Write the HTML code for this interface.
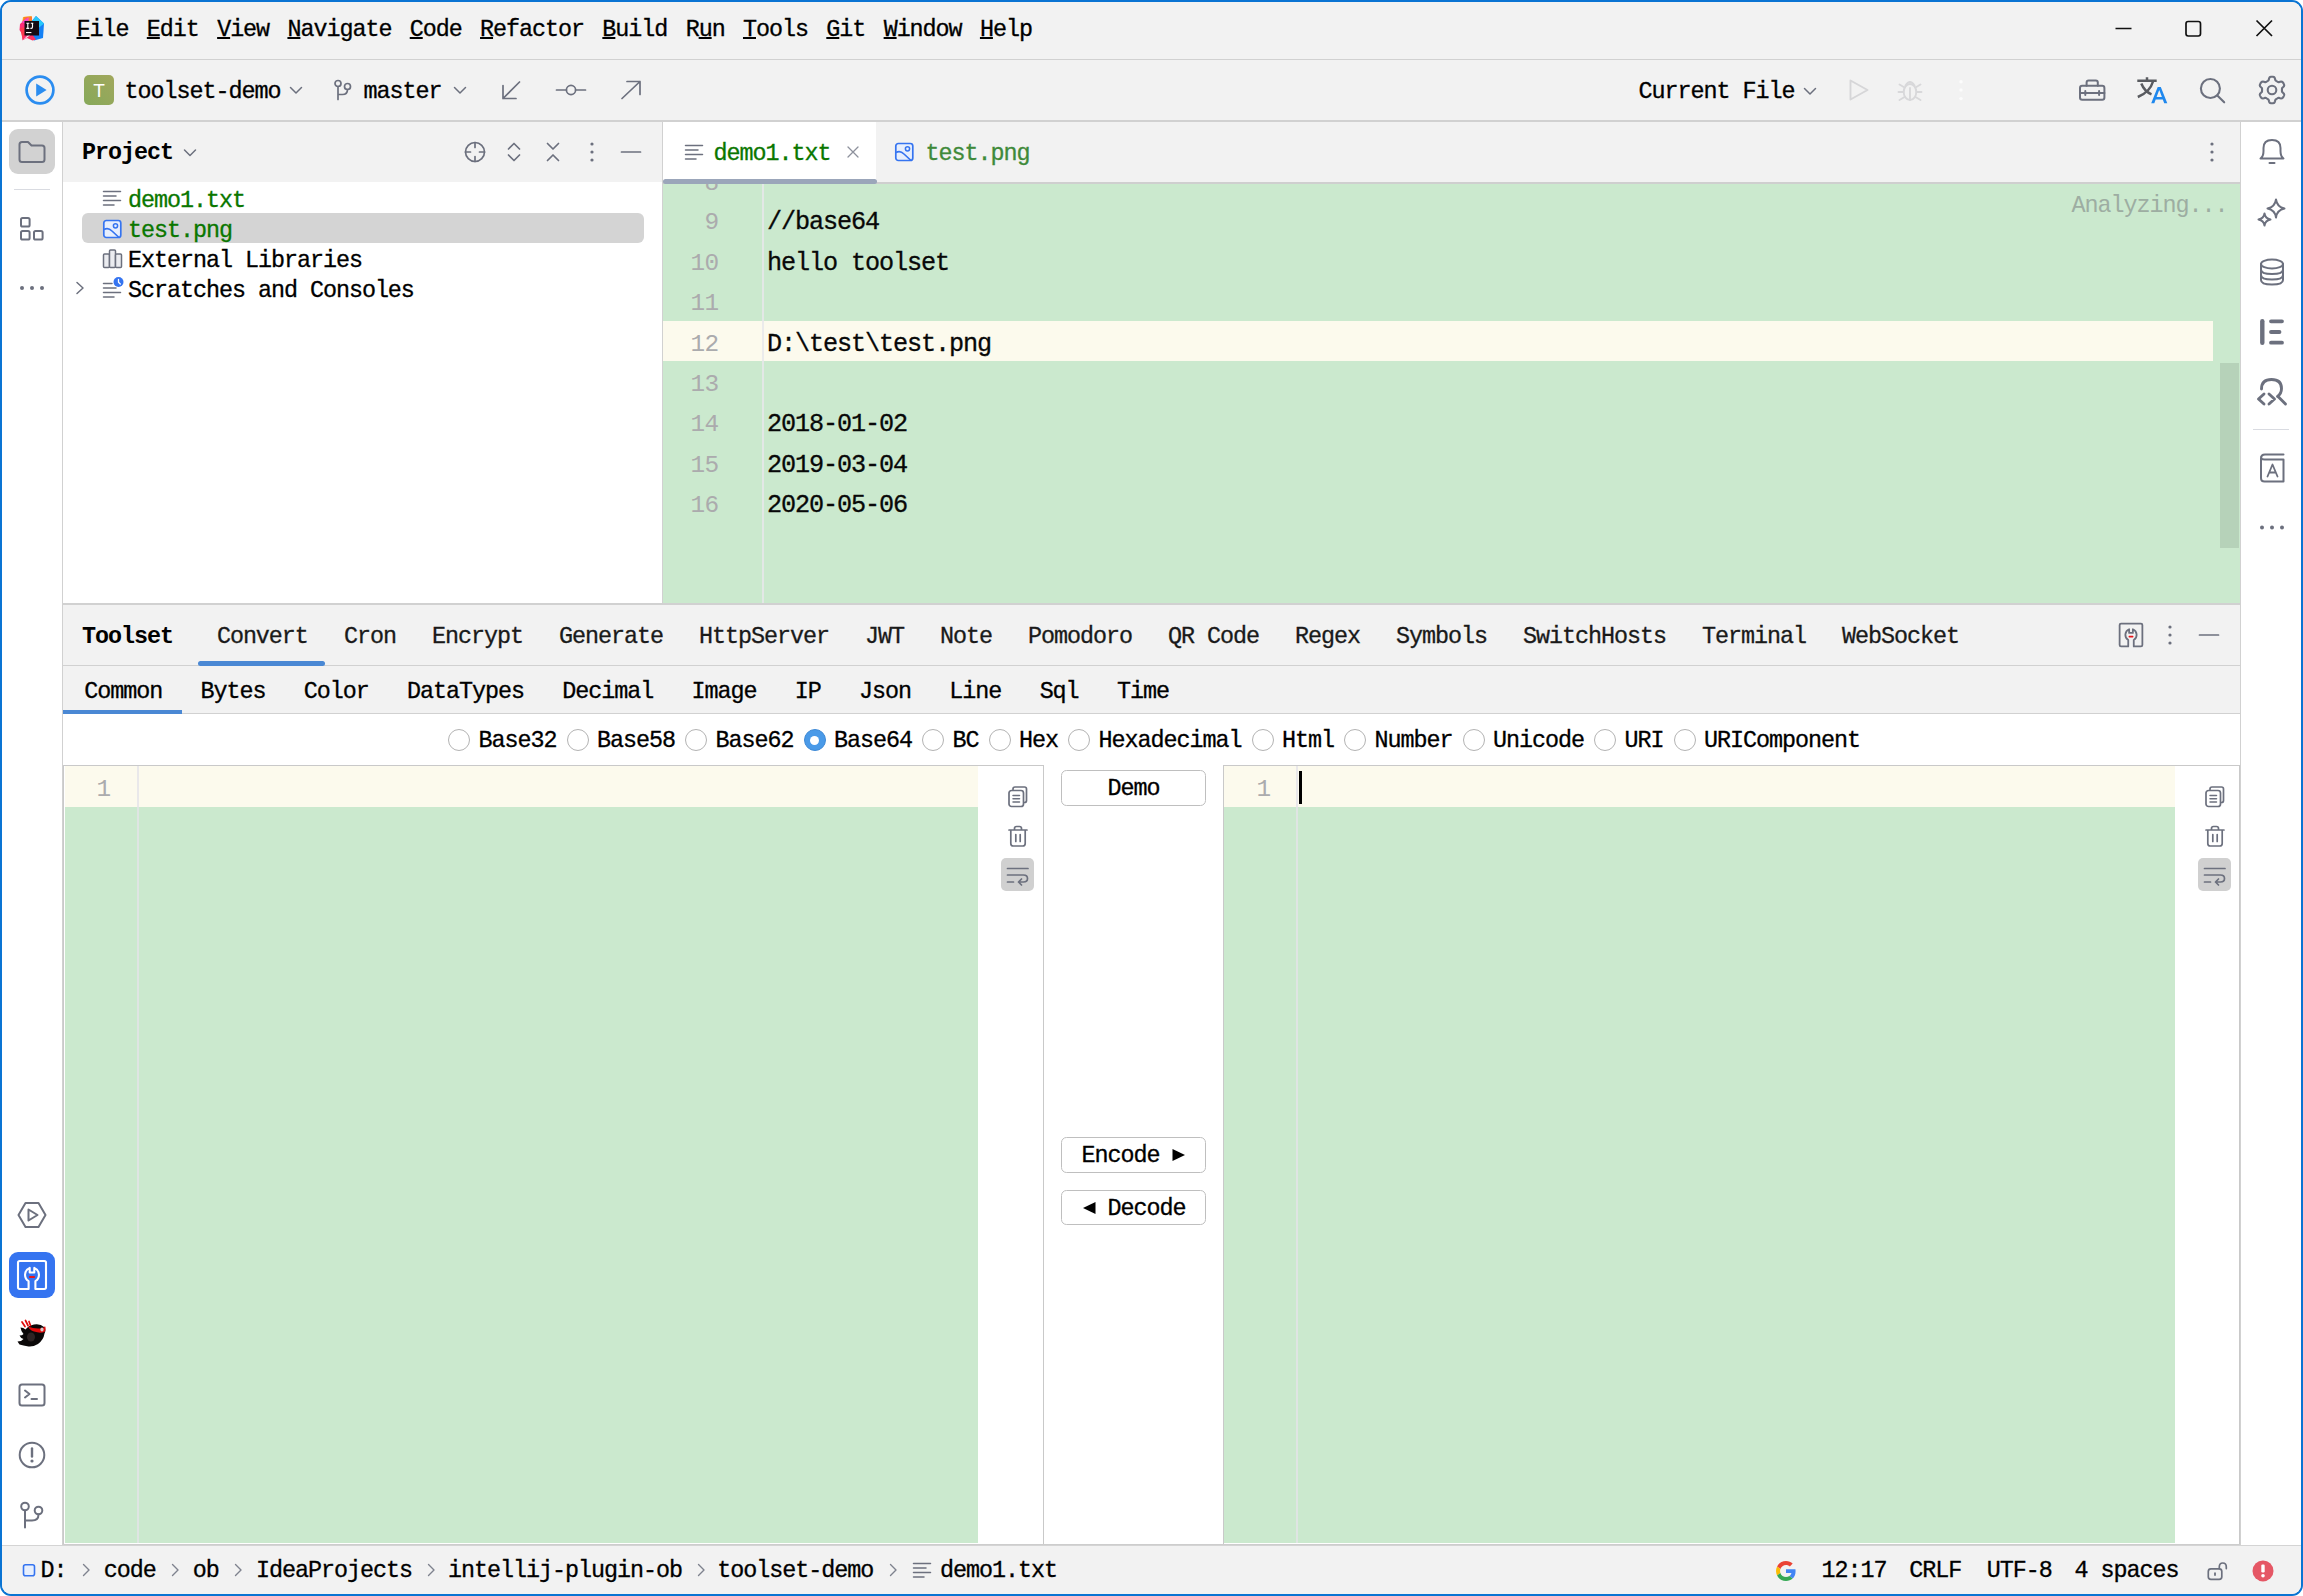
<!DOCTYPE html>
<html>
<head>
<meta charset="utf-8">
<title>toolset-demo</title>
<style>
html,body{margin:0;padding:0;background:#fff;}
body{width:2303px;height:1596px;overflow:hidden;position:relative;font-family:"Liberation Mono",monospace;color:#000;}
#win{position:absolute;left:0;top:0;width:2303px;height:1596px;box-sizing:border-box;border:2px solid #0a74d3;border-radius:11px;background:#f2f2f2;overflow:hidden;}
#root{position:absolute;left:-2px;top:-2px;width:2303px;height:1596px;}
.a{position:absolute;}
.bx{position:absolute;box-sizing:border-box;}
.t{position:absolute;white-space:pre;font-size:23.4px;letter-spacing:-1.043px;line-height:30px;height:30px;color:#000;-webkit-text-stroke:0.3px currentColor;}
.e{position:absolute;white-space:pre;font-size:25.2px;letter-spacing:-1.123px;line-height:40px;height:40px;color:#080808;-webkit-text-stroke:0.3px currentColor;}
.ln{position:absolute;white-space:pre;font-size:24.4px;letter-spacing:-0.643px;line-height:40px;height:40px;color:#ababad;text-align:right;}
.b{font-weight:bold;-webkit-text-stroke:0;}
.g{color:#0a7700;}
.hl{position:absolute;height:1px;background:#d1d1d1;}
.vl{position:absolute;width:1px;background:#d1d1d1;}
svg{position:absolute;overflow:visible;}
.s{fill:none;stroke:#6c707e;stroke-width:1.7;stroke-linecap:round;stroke-linejoin:round;}
.mi{display:inline-block;margin-right:18.33px;}
.mu{text-decoration:underline;text-decoration-thickness:2px;text-underline-offset:0.6px;}
</style>
</head>
<body>
<div id="win"><div id="root">

<!-- ===== base panels ===== -->
<div class="a" style="left:2px;top:2px;width:2299px;height:57px;background:#f2f2f2;"></div>
<div class="hl" style="left:2px;top:59px;width:2299px;"></div>
<div class="a" style="left:2px;top:60px;width:2299px;height:60px;background:#f2f2f2;"></div>
<div class="hl" style="left:2px;top:120px;width:2299px;height:2px;background:#d1d1d1;"></div>

<!-- left stripe -->
<div class="a" style="left:2px;top:122px;width:60px;height:1423px;background:#fff;"></div>
<div class="vl" style="left:62px;top:122px;height:1423px;"></div>
<!-- right stripe -->
<div class="a" style="left:2241px;top:122px;width:60px;height:1423px;background:#fff;"></div>
<div class="vl" style="left:2240px;top:122px;height:1423px;"></div>

<!-- project panel -->
<div class="a" style="left:63px;top:122px;width:599px;height:60px;background:#f2f2f2;"></div>
<div class="a" style="left:63px;top:182px;width:599px;height:421px;background:#fff;"></div>
<div class="vl" style="left:662px;top:122px;height:481px;"></div>

<!-- editor -->
<div class="a" style="left:663px;top:122px;width:1577px;height:61px;background:#f2f2f2;"></div>
<div class="hl" style="left:663px;top:182px;width:1577px;height:2px;background:#cfcfcf;"></div>
<div class="a" style="left:663px;top:184px;width:1577px;height:419px;background:#cbe9ce;"></div>

<!-- bottom tool window -->
<div class="hl" style="left:63px;top:603px;width:2177px;height:2px;"></div>
<div class="a" style="left:63px;top:605px;width:2177px;height:60px;background:#f2f2f2;"></div>
<div class="hl" style="left:63px;top:665px;width:2177px;"></div>
<div class="a" style="left:63px;top:666px;width:2177px;height:47px;background:#f2f2f2;"></div>
<div class="hl" style="left:63px;top:713px;width:2177px;"></div>
<div class="a" style="left:63px;top:714px;width:2177px;height:830px;background:#fff;"></div>

<!-- status bar -->
<div class="hl" style="left:63px;top:1544px;width:2177px;height:2px;background:#cdcdcd;"></div><div class="hl" style="left:2px;top:1545px;width:2299px;height:1px;background:#d4d4d4;"></div>
<div class="a" style="left:2px;top:1546px;width:2299px;height:48px;background:#f2f2f2;"></div>

<!-- ===== MENU ===== -->
<div class="t" style="left:76.5px;top:15px;"><span class="mi"><span class="mu">F</span>ile</span><span class="mi"><span class="mu">E</span>dit</span><span class="mi"><span class="mu">V</span>iew</span><span class="mi"><span class="mu">N</span>avigate</span><span class="mi"><span class="mu">C</span>ode</span><span class="mi"><span class="mu">R</span>efactor</span><span class="mi"><span class="mu">B</span>uild</span><span class="mi">R<span class="mu">u</span>n</span><span class="mi"><span class="mu">T</span>ools</span><span class="mi"><span class="mu">G</span>it</span><span class="mi"><span class="mu">W</span>indow</span><span class="mi"><span class="mu">H</span>elp</span></div>
<svg style="left:19px;top:15px;" width="26" height="26" viewBox="0 0 26 26">
<polygon points="4,2 12.500,1 14,13 2,15" fill="#fcb91c"/>
<polygon points="5,2 13,1.500 13,12 3,9" fill="#fd7a2c"/>
<polygon points="1,9 8,3 14,15 3.500,25.500 2.500,18 0.500,15" fill="#fe2d78"/>
<polygon points="2.500,7 9.500,2 10,11" fill="#f84ad4" opacity=".85"/>
<polygon points="1,13 8,12 4,25" fill="#fd3a4f"/>
<polygon points="17,1 25,8.500 24,23 15,25.500 11,21 12,7" fill="#1481f5"/>
<polygon points="17,1 25,8.500 19.500,13 13,6" fill="#27c8fb"/>
<polygon points="3.500,25.500 13,19 17,24.500 13.500,25.500 8,23" fill="#fd2f62"/>
<rect x="5.500" y="6" width="14.500" height="14.500" fill="#150b12"/>
<rect x="7" y="17" width="5.400" height="1.100" fill="#fff"/>
<path d="M7.300 8.200H10.300M8.800 8.200V13.300M7.300 13.300H10.300M11.800 8.200H14.300M13.500 8.200V12Q13.500 13.400 12.200 13.400H11.400" stroke="#fff" stroke-width="1.150" fill="none"/>
</svg>
<svg style="left:2112px;top:14px;" width="24" height="28" viewBox="0 0 24 28"><path d="M3.5 14.5H19.5" stroke="#111" stroke-width="1.7" fill="none"/></svg>
<svg style="left:2182px;top:14px;" width="24" height="28" viewBox="0 0 24 28"><rect x="4" y="7.5" width="14.5" height="14.5" rx="2.2" stroke="#111" stroke-width="1.7" fill="none"/></svg>
<svg style="left:2252px;top:14px;" width="24" height="28" viewBox="0 0 24 28"><path d="M4.5 6.5L20 22M20 6.5L4.5 22" stroke="#111" stroke-width="1.7" fill="none"/></svg>
<!--MENU-->

<!-- ===== TOOLBAR ===== -->
<svg style="left:24px;top:74px;" width="32" height="32" viewBox="0 0 32 32"><circle cx="16" cy="16" r="13.4" fill="none" stroke="#2b8df0" stroke-width="2.7"/><path d="M12.2 9.6L22.6 16L12.2 22.4Z" fill="#2b8df0"/></svg>
<div class="bx" style="left:84px;top:75px;width:30px;height:30px;border-radius:5px;background:linear-gradient(45deg,#86a95a,#a1a75c);"></div>
<div class="a" style="left:84px;top:75px;width:30px;height:30px;line-height:32px;text-align:center;font-family:'Liberation Sans',sans-serif;font-size:19px;color:#fff;">T</div>
<div class="t" style="left:124.5px;top:77px;">toolset-demo</div>
<svg style="left:288px;top:84px;" width="16" height="12" viewBox="0 0 16 12"><path class="s" d="M2.5 3.5L8 9L13.5 3.5" style="stroke-width:1.5"/></svg>
<svg style="left:332px;top:78px;" width="22" height="24" viewBox="0 0 22 24"><circle class="s" cx="6" cy="5.5" r="3"/><circle class="s" cx="15.5" cy="8.5" r="3"/><path class="s" d="M6 8.5V21.5M6 16.5H10.5Q15.5 16.5 15.5 11.5"/></svg>
<div class="t" style="left:363.5px;top:77px;">master</div>
<svg style="left:452px;top:84px;" width="16" height="12" viewBox="0 0 16 12"><path class="s" d="M2.5 3.5L8 9L13.5 3.5" style="stroke-width:1.5"/></svg>
<svg style="left:499px;top:78px;" width="24" height="24" viewBox="0 0 24 24"><path class="s" d="M20.5 4L4 20.5M4 7.5V20.5H17"/></svg>
<svg style="left:554px;top:78px;" width="34" height="24" viewBox="0 0 34 24"><circle class="s" cx="17" cy="12" r="4.6"/><path class="s" d="M2.5 12H12.4M21.6 12H31.5"/></svg>
<svg style="left:619px;top:78px;" width="24" height="24" viewBox="0 0 24 24"><path class="s" d="M3 20.5L21 3.5M8 3.5H21V16.5"/></svg>
<div class="t" style="left:1638.5px;top:77px;">Current File</div>
<svg style="left:1802px;top:85px;" width="16" height="12" viewBox="0 0 16 12"><path class="s" d="M2.5 3.5L8 9L13.5 3.5" style="stroke-width:1.5"/></svg>
<svg style="left:1846px;top:77px;" width="26" height="26" viewBox="0 0 26 26"><path d="M4.5 3.5L21.5 13L4.5 22.5Z" fill="none" stroke="#d6d6d8" stroke-width="1.9" stroke-linejoin="round"/></svg>
<svg style="left:1896px;top:76px;" width="28" height="28" viewBox="0 0 28 28" fill="none" stroke="#d8d8da" stroke-width="1.9" stroke-linecap="round"><ellipse cx="14" cy="16" rx="6.3" ry="8"/><path d="M9.5 9.5Q14 2.5 18.5 9.5M14 12V24M2.5 16H7.5M20.5 16H25.5M3.5 8.5L8.5 11.5M24.5 8.5L19.5 11.5M3.5 24L8.5 21M24.5 24L19.5 21"/></svg>
<svg style="left:1957px;top:78px;" width="6" height="24" viewBox="0 0 6 24" fill="#fcfcfc"><circle cx="4" cy="3.800" r="1.700"/><circle cx="4" cy="12" r="1.700"/><circle cx="4" cy="20.600" r="1.700"/></svg>
<svg style="left:2076px;top:76px;" width="32" height="28" viewBox="0 0 32 28"><rect class="s" style="stroke-width:2" x="4" y="9.700" width="24.400" height="14" rx="2.200"/><path class="s" style="stroke-width:2" d="M10.600 9.700V6.500Q10.600 4.500 12.600 4.500H19.800Q21.800 4.500 21.800 6.500V9.700M4 17H28.400M9.300 15V19M23.100 15V19"/></svg>
<svg style="left:2134px;top:74px;" width="36" height="32" viewBox="0 0 36 32"><path d="M3.300 6.800H22.700M13 3.300V6.800M19 7.500Q16 18 3.800 23M7.300 9.500Q10.500 17.500 17.500 20.300" fill="none" stroke="#595b60" stroke-width="2.500" stroke-linecap="butt"/><path d="M17.200 29.300L23.700 13H26.800L33.300 29.300H30.200L28.800 25.500H21.700L20.300 29.300ZM22.600 23.100H27.900L25.250 16Z" fill="#1f88ee"/></svg>
<svg style="left:2196px;top:74px;" width="32" height="32" viewBox="0 0 32 32"><circle class="s" cx="14.400" cy="14.500" r="9.500" style="stroke-width:2.100"/><path class="s" d="M21.300 21.400L28.200 28.300" style="stroke-width:2.100"/></svg>
<svg style="left:2256px;top:74px;" width="32" height="32" viewBox="0 0 32 32"><path class="s" style="stroke-width:2.100" d="M25.94 16.00L25.94 16.43L25.94 16.87L25.96 17.31L26.08 17.78L26.47 18.32L27.20 19.00L27.90 19.75L28.18 20.43L28.15 21.03L27.99 21.59L27.75 22.12L27.48 22.63L27.18 23.12L26.83 23.59L26.44 24.01L25.93 24.33L25.20 24.43L24.20 24.20L23.25 23.91L22.58 23.84L22.12 23.97L21.72 24.17L21.34 24.39L20.97 24.61L20.59 24.82L20.22 25.04L19.84 25.28L19.50 25.62L19.22 26.23L19.00 27.20L18.70 28.18L18.25 28.76L17.72 29.04L17.15 29.18L16.58 29.24L16.00 29.26L15.42 29.24L14.85 29.18L14.28 29.04L13.75 28.76L13.30 28.18L13.00 27.20L12.78 26.23L12.50 25.62L12.16 25.28L11.78 25.04L11.41 24.82L11.03 24.61L10.66 24.39L10.28 24.17L9.88 23.97L9.42 23.84L8.75 23.91L7.80 24.20L6.80 24.43L6.07 24.33L5.56 24.01L5.17 23.59L4.82 23.12L4.52 22.63L4.25 22.12L4.01 21.59L3.85 21.03L3.82 20.43L4.10 19.75L4.80 19.00L5.53 18.32L5.92 17.78L6.04 17.31L6.06 16.87L6.06 16.43L6.06 16.00L6.06 15.57L6.06 15.13L6.04 14.69L5.92 14.22L5.53 13.68L4.80 13.00L4.10 12.25L3.82 11.57L3.85 10.97L4.01 10.41L4.25 9.88L4.52 9.37L4.82 8.88L5.17 8.41L5.56 7.99L6.07 7.67L6.80 7.57L7.80 7.80L8.75 8.09L9.42 8.16L9.88 8.03L10.28 7.83L10.66 7.61L11.03 7.39L11.41 7.18L11.78 6.96L12.16 6.72L12.50 6.38L12.78 5.77L13.00 4.80L13.30 3.82L13.75 3.24L14.28 2.96L14.85 2.82L15.42 2.76L16.00 2.74L16.58 2.76L17.15 2.82L17.72 2.96L18.25 3.24L18.70 3.82L19.00 4.80L19.22 5.77L19.50 6.38L19.84 6.72L20.22 6.96L20.59 7.18L20.97 7.39L21.34 7.61L21.72 7.83L22.12 8.03L22.58 8.16L23.25 8.09L24.20 7.80L25.20 7.57L25.93 7.67L26.44 7.99L26.83 8.41L27.18 8.88L27.48 9.37L27.75 9.88L27.99 10.41L28.15 10.97L28.18 11.57L27.90 12.25L27.20 13.00L26.47 13.68L26.08 14.22L25.96 14.69L25.94 15.13L25.94 15.57Z"/><circle class="s" style="stroke-width:2.100" cx="16" cy="16" r="4.300"/></svg>
<!--TOOLBAR-->

<!-- ===== LEFT STRIPE ===== -->
<div class="bx" style="left:9px;top:129px;width:46px;height:45px;border-radius:9px;background:#d2d2d2;"></div>
<svg style="left:17px;top:139px;" width="30" height="26" viewBox="0 0 30 26"><path class="s" style="stroke-width:2" d="M2.5 5.5Q2.5 3 5 3H11L14.5 6.5H25Q27.5 6.5 27.5 9V20.5Q27.5 23 25 23H5Q2.5 23 2.5 20.5Z"/></svg>
<div class="hl" style="left:14px;top:189px;width:36px;background:#d9dbe1;"></div>
<svg style="left:18px;top:215px;" width="28" height="28" viewBox="0 0 28 28"><rect class="s" style="stroke-width:2" x="3" y="3" width="8.6" height="8.6" rx="1.6"/><rect class="s" style="stroke-width:2" x="3" y="16" width="8.6" height="8.6" rx="1.6"/><rect class="s" style="stroke-width:2" x="16" y="16" width="8.6" height="8.6" rx="1.6"/></svg>
<svg style="left:18px;top:284px;" width="28" height="8" viewBox="0 0 28 8" fill="#6c707e"><circle cx="4" cy="4" r="2"/><circle cx="14" cy="4" r="2"/><circle cx="24" cy="4" r="2"/></svg>
<svg style="left:16px;top:1200px;" width="32" height="30" viewBox="0 0 32 30"><path class="s" style="stroke-width:2" d="M9.5 3H22.5L29.5 15L22.5 27H9.5L2.5 15Z"/><path class="s" style="stroke-width:2" d="M12.5 9.5L21.5 15L12.5 20.5Z"/></svg>
<div class="bx" style="left:9px;top:1252px;width:46px;height:46px;border-radius:9px;background:#3574f0;"></div>
<svg style="left:16px;top:1259px;" width="32" height="32" viewBox="0 0 32 32"><path d="M12.600 30H3.700Q2 30 2 28.300V3.700Q2 2 3.700 2H28.300Q30 2 30 3.700V28.300Q30 30 28.300 30H19.400V22.200A7.500 7.500 0 0 0 18.300 8.900V13.500H13.700V8.900A7.500 7.500 0 0 0 12.600 22.200Z" fill="none" stroke="#fff" stroke-width="2.100" stroke-linejoin="round"/><rect x="13" y="17" width="6" height="2" rx=".8" fill="#e8151c"/></svg>
<svg style="left:16px;top:1318px;" width="32" height="32" viewBox="0 0 32 32"><path d="M4.500 9.500Q7.500 9.500 9.500 11.500Q12.500 7.500 18 6.500Q24.500 5.500 28 9Q30.500 12 28.500 15.500Q27.500 22 22 26Q17 29 12.500 28.500Q7 27.500 3.500 26.500L1.500 23.500Q5.500 23.500 7.500 21Q4.500 20 3.500 17.500Q6.500 17.500 7.500 16Q5 13.500 4.500 9.500Z" fill="#0b0808"/><ellipse cx="15" cy="19" rx="4" ry="4.500" fill="#4a3d3d" opacity=".55"/><path d="M12 8.500Q18 11 24 10.500Q28 10 29 8Q30.500 11.500 28.500 14Q24 15.500 18 13.500Q13.500 12 12 8.500Z" fill="#e00b0b"/><path d="M6 4L9 8.500M9.500 2.500L12 7.500M13 3.500L14.500 7.500" stroke="#e00b0b" stroke-width="1.700" stroke-linecap="round"/><ellipse cx="26" cy="11.500" rx="1.600" ry="2" fill="#d8c9c9"/></svg>
<svg style="left:17px;top:1381px;" width="30" height="28" viewBox="0 0 30 28"><rect class="s" style="stroke-width:2" x="2.500" y="3.500" width="25" height="21" rx="2.500"/><path class="s" style="stroke-width:2" d="M8 9.500L12.500 13L8 16.500M14.500 18H20"/></svg>
<svg style="left:17px;top:1440px;" width="30" height="30" viewBox="0 0 30 30"><circle class="s" style="stroke-width:2" cx="15" cy="15" r="12.300"/><path class="s" style="stroke-width:2.4" d="M15 8.500V16.500"/><circle cx="15" cy="21" r="1.600" fill="#6c707e"/></svg>
<svg style="left:18px;top:1500px;" width="28" height="30" viewBox="0 0 28 30"><circle class="s" style="stroke-width:2" cx="7" cy="6.500" r="3.800"/><circle class="s" style="stroke-width:2" cx="20.500" cy="10.500" r="3.800"/><path class="s" style="stroke-width:2" d="M7 10.500V27.500M7 20.500H14Q20.500 20.500 20.500 14.500"/></svg>
<!--LSTRIPE-->

<!-- ===== RIGHT STRIPE ===== -->
<svg style="left:2257px;top:137px;" width="30" height="30" viewBox="0 0 30 30"><path class="s" style="stroke-width:2" d="M3.500 21.500Q6.500 19.500 6.500 14V11Q6.500 3 15 3Q23.500 3 23.500 11V14Q23.500 19.500 26.500 21.500Z"/><path class="s" style="stroke-width:2" d="M12.500 26H17.500"/></svg>
<svg style="left:2256px;top:197px;" width="32" height="32" viewBox="0 0 32 32"><path class="s" style="stroke-width:2" d="M20 2.500Q21 10 28.500 11.500Q21 13 20 20.500Q19 13 11.500 11.500Q19 10 20 2.500Z"/><path class="s" style="stroke-width:2" d="M8.500 16.500Q9.200 21.500 14.500 22.500Q9.200 23.500 8.500 28.500Q7.800 23.500 2.500 22.500Q7.800 21.500 8.500 16.500Z"/></svg>
<svg style="left:2258px;top:257px;" width="28" height="30" viewBox="0 0 28 30"><ellipse class="s" style="stroke-width:2" cx="14" cy="7" rx="11" ry="4.500"/><path class="s" style="stroke-width:2" d="M3 7V23Q3 27.500 14 27.500Q25 27.500 25 23V7M3 12.500Q3 17 14 17Q25 17 25 12.500M3 18Q3 22.500 14 22.500Q25 22.500 25 18"/></svg>
<svg style="left:2258px;top:317px;" width="28" height="30" viewBox="0 0 28 30"><path d="M4.300 4.200V25.800" stroke="#6c707e" stroke-width="4.400" stroke-linecap="round" fill="none"/><path d="M13 4.300H24M13 15H21.500M13 25.700H24" stroke="#6c707e" stroke-width="3.800" stroke-linecap="round" fill="none"/></svg>
<svg style="left:2255px;top:376px;" width="34" height="32" viewBox="0 0 34 32"><path class="s" style="stroke-width:2.900" d="M6.500 13Q6.500 3.500 16.500 3.500Q26.500 3.500 26.500 12.500Q26.500 17.500 22.500 20.500M23 20.500L30.500 28M9 18L3.500 23L9 28M14 18L19.500 23L14 28"/></svg>
<div class="hl" style="left:2253px;top:429px;width:36px;background:#d9dbe1;"></div>
<svg style="left:2258px;top:451px;" width="28" height="34" viewBox="0 0 28 34"><path class="s" style="stroke-width:2" d="M25.500 3.500H7Q3 3.500 3 7.500V27Q3 30.500 6.500 30.500H25.500V8.500H6.500Q3 8.500 3 6"/><path class="s" style="stroke-width:1.800" d="M9.500 25.500L14.500 13.500L19.500 25.500M11.300 21.500H17.700"/></svg>
<svg style="left:2258px;top:523px;" width="28" height="8" viewBox="0 0 28 8" fill="#6c707e"><circle cx="4" cy="4.500" r="2"/><circle cx="14" cy="4.500" r="2"/><circle cx="24" cy="4.500" r="2"/></svg>
<!--RSTRIPE-->

<!-- ===== PROJECT ===== -->
<div class="t b" style="left:82px;top:137.500px;">Project</div>
<svg style="left:182px;top:147px;" width="16" height="12" viewBox="0 0 16 12"><path class="s" d="M2.500 3L8 8.500L13.500 3" style="stroke-width:1.500"/></svg>
<svg style="left:463px;top:140px;" width="24" height="24" viewBox="0 0 24 24"><circle class="s" cx="12" cy="12" r="9.500"/><path class="s" d="M12 2.500V7.500M12 16.500V21.500M2.500 12H7.500M16.500 12H21.500"/></svg>
<svg style="left:502px;top:140px;" width="24" height="24" viewBox="0 0 24 24"><path class="s" d="M6.500 9L12 3.500L17.500 9M6.500 15L12 20.500L17.500 15"/></svg>
<svg style="left:541px;top:140px;" width="24" height="24" viewBox="0 0 24 24"><path class="s" d="M6.500 3.500L12 9L17.500 3.500M6.500 20.500L12 15L17.500 20.500"/></svg>
<svg style="left:589px;top:140px;" width="6" height="24" viewBox="0 0 6 24" fill="#6c707e"><circle cx="3" cy="4" r="1.600"/><circle cx="3" cy="12" r="1.600"/><circle cx="3" cy="20" r="1.600"/></svg>
<svg style="left:619px;top:140px;" width="24" height="24" viewBox="0 0 24 24"><path class="s" d="M2.500 12H21.500"/></svg>
<div class="bx" style="left:82px;top:213px;width:562px;height:30px;border-radius:6px;background:#d4d4d4;"></div>
<svg style="left:102px;top:188px;" width="22" height="22" viewBox="0 0 22 22"><path class="s" style="stroke-width:1.500" d="M1.500 3.500H18.500M1.500 8H14M1.500 12.500H18.500M1.500 17H12"/></svg>
<div class="t g" style="left:128px;top:185.500px;">demo1.txt</div>
<svg style="left:102px;top:218px;" width="22" height="22" viewBox="0 0 22 22"><rect x="1.800" y="2.500" width="17" height="17" rx="2.500" fill="#e7effd" stroke="#3574f0" stroke-width="1.700"/><circle cx="13.500" cy="7.800" r="2.100" fill="none" stroke="#3574f0" stroke-width="1.500"/><path d="M2 11.500Q6 9 10 13L17 19.500" fill="none" stroke="#3574f0" stroke-width="1.700"/></svg>
<div class="t g" style="left:128px;top:215.500px;">test.png</div>
<svg style="left:102px;top:248px;" width="22" height="22" viewBox="0 0 22 22"><rect x="1.500" y="6" width="6" height="13.500" rx="1" fill="#ebecf0" stroke="#6c707e" stroke-width="1.500"/><rect x="7.500" y="2" width="6" height="17.500" rx="1" fill="#ebecf0" stroke="#6c707e" stroke-width="1.500"/><rect x="13.500" y="6" width="6" height="13.500" rx="1" fill="#ebecf0" stroke="#6c707e" stroke-width="1.500"/></svg>
<div class="t" style="left:128px;top:245.500px;">External Libraries</div>
<svg style="left:73px;top:279px;" width="14" height="18" viewBox="0 0 14 18"><path class="s" d="M4 3.500L10 9L4 14.500" style="stroke-width:1.500"/></svg>
<svg style="left:102px;top:276px;" width="24" height="24" viewBox="0 0 24 24"><path class="s" style="stroke-width:1.500" d="M1.500 7.500H10M1.500 12H14M1.500 16.500H18.500M1.500 21H12"/><circle cx="16.500" cy="6" r="5" fill="#3574f0"/><path d="M16.500 3.500V6.300L18.300 8" stroke="#fff" stroke-width="1.300" fill="none" stroke-linecap="round"/></svg>
<div class="t" style="left:128px;top:275.500px;">Scratches and Consoles</div>
<!--PROJECT-->

<!-- ===== EDITOR ===== -->
<div class="a" style="left:663px;top:122px;width:213px;height:58px;background:#fff;"></div>
<div class="bx" style="left:663px;top:179px;width:214px;height:5px;border-radius:2.500px;background:#9ba6ba;"></div>
<svg style="left:684px;top:141.700px;" width="22" height="22" viewBox="0 0 22 22"><path class="s" style="stroke-width:1.500" d="M1.500 3.500H18.500M1.500 8H14M1.500 12.500H18.500M1.500 17H12"/></svg>
<div class="t g" style="left:713.500px;top:138.500px;">demo1.txt</div>
<svg style="left:845px;top:144px;" width="16" height="16" viewBox="0 0 16 16"><path d="M3 3L13 13M13 3L3 13" stroke="#8d919c" stroke-width="1.300" fill="none" stroke-linecap="round"/></svg>
<svg style="left:894px;top:141px;" width="22" height="22" viewBox="0 0 22 22"><rect x="1.800" y="2.500" width="17" height="17" rx="2.500" fill="#e7effd" stroke="#3574f0" stroke-width="1.700"/><circle cx="13.500" cy="7.800" r="2.100" fill="none" stroke="#3574f0" stroke-width="1.500"/><path d="M2 11.500Q6 9 10 13L17 19.500" fill="none" stroke="#3574f0" stroke-width="1.700"/></svg>
<div class="t" style="left:925.500px;top:138.500px;color:#3f8a3a;">test.png</div>
<svg style="left:2209px;top:140px;" width="6" height="24" viewBox="0 0 6 24" fill="#6c707e"><circle cx="3" cy="4" r="1.600"/><circle cx="3" cy="12" r="1.600"/><circle cx="3" cy="20" r="1.600"/></svg>
<div class="a" style="left:663px;top:321px;width:1550px;height:40px;background:#fcfaed;"></div>
<div class="vl" style="left:762px;top:184px;height:419px;width:2px;background:rgba(232,232,234,.85);"></div>
<div class="a" style="left:2220px;top:363px;width:19px;height:185px;background:#b6d2b9;"></div>
<div class="t" style="left:2071.500px;top:191px;color:#9dada2;-webkit-text-stroke:0;">Analyzing...</div>
<div class="ln" style="left:663px;width:55.500px;top:203.3px;">9</div><div class="e" style="left:767px;top:203.3px;">//base64</div>
<div class="ln" style="left:663px;width:55.500px;top:243.7px;">10</div><div class="e" style="left:767px;top:243.7px;">hello toolset</div>
<div class="ln" style="left:663px;width:55.500px;top:284.2px;">11</div>
<div class="ln" style="left:663px;width:55.500px;top:324.6px;">12</div><div class="e" style="left:767px;top:324.6px;">D:\test\test.png</div>
<div class="ln" style="left:663px;width:55.500px;top:365.0px;">13</div>
<div class="ln" style="left:663px;width:55.500px;top:405.4px;">14</div><div class="e" style="left:767px;top:405.4px;">2018-01-02</div>
<div class="ln" style="left:663px;width:55.500px;top:445.9px;">15</div><div class="e" style="left:767px;top:445.9px;">2019-03-04</div>
<div class="ln" style="left:663px;width:55.500px;top:486.3px;">16</div><div class="e" style="left:767px;top:486.3px;">2020-05-06</div>
<div class="a" style="left:663px;top:184px;width:100px;height:8px;overflow:hidden;"><div class="ln" style="left:0;width:55.500px;top:-20.000px;">8</div></div>
<!--EDITOR-->

<!-- ===== TOOLSET ===== -->
<div class="t b" style="left:82px;top:621.500px;">Toolset</div>
<div class="t" style="left:216.900px;top:621.500px;color:#1a1a1a;"><span style="display:inline-block;margin-right:36.050px;">Convert</span><span style="display:inline-block;margin-right:36.050px;">Cron</span><span style="display:inline-block;margin-right:36.050px;">Encrypt</span><span style="display:inline-block;margin-right:36.050px;">Generate</span><span style="display:inline-block;margin-right:36.050px;">HttpServer</span><span style="display:inline-block;margin-right:36.050px;">JWT</span><span style="display:inline-block;margin-right:36.050px;">Note</span><span style="display:inline-block;margin-right:36.050px;">Pomodoro</span><span style="display:inline-block;margin-right:36.050px;">QR Code</span><span style="display:inline-block;margin-right:36.050px;">Regex</span><span style="display:inline-block;margin-right:36.050px;">Symbols</span><span style="display:inline-block;margin-right:36.050px;">SwitchHosts</span><span style="display:inline-block;margin-right:36.050px;">Terminal</span><span style="display:inline-block;margin-right:36.050px;">WebSocket</span></div>
<div class="bx" style="left:198px;top:661px;width:127px;height:5px;border-radius:2.500px;background:#4a88d4;"></div>
<svg style="left:2118px;top:622px;" width="26" height="26" viewBox="0 0 32 32"><path d="M12.600 30H3.700Q2 30 2 28.300V3.700Q2 2 3.700 2H28.300Q30 2 30 3.700V28.300Q30 30 28.300 30H19.400V22.200A7.500 7.500 0 0 0 18.300 8.900V13.500H13.700V8.900A7.500 7.500 0 0 0 12.600 22.200Z" fill="none" stroke="#6c707e" stroke-width="2.200" stroke-linejoin="round"/><rect x="13" y="17" width="6" height="2" rx=".8" fill="#e8151c"/></svg>
<svg style="left:2167px;top:623px;" width="6" height="24" viewBox="0 0 6 24" fill="#6c707e"><circle cx="3" cy="4" r="1.600"/><circle cx="3" cy="12" r="1.600"/><circle cx="3" cy="20" r="1.600"/></svg>
<svg style="left:2197px;top:623px;" width="24" height="24" viewBox="0 0 24 24"><path class="s" d="M2.500 12H21.500"/></svg>
<div class="t" style="left:84.200px;top:677.200px;"><span style="display:inline-block;margin-right:38.300px;">Common</span><span style="display:inline-block;margin-right:38.300px;">Bytes</span><span style="display:inline-block;margin-right:38.300px;">Color</span><span style="display:inline-block;margin-right:38.300px;">DataTypes</span><span style="display:inline-block;margin-right:38.300px;">Decimal</span><span style="display:inline-block;margin-right:38.300px;">Image</span><span style="display:inline-block;margin-right:38.300px;">IP</span><span style="display:inline-block;margin-right:38.300px;">Json</span><span style="display:inline-block;margin-right:38.300px;">Line</span><span style="display:inline-block;margin-right:38.300px;">Sql</span><span style="display:inline-block;margin-right:38.300px;">Time</span></div>
<div class="a" style="left:63px;top:710px;width:119px;height:4px;background:#4a88d4;"></div>
<div class="bx" style="left:448.3px;top:729px;width:22px;height:22px;border-radius:50%;background:#fff;border:1.500px solid #b3b3b3;"></div><div class="t" style="left:478.5px;top:725.700px;">Base32</div>
<div class="bx" style="left:566.8px;top:729px;width:22px;height:22px;border-radius:50%;background:#fff;border:1.500px solid #b3b3b3;"></div><div class="t" style="left:597.0px;top:725.700px;">Base58</div>
<div class="bx" style="left:685.3px;top:729px;width:22px;height:22px;border-radius:50%;background:#fff;border:1.500px solid #b3b3b3;"></div><div class="t" style="left:715.5px;top:725.700px;">Base62</div>
<div class="bx" style="left:803.8px;top:729px;width:22px;height:22px;border-radius:50%;background:#4a9ae8;border:1px solid #3f8ad6;"></div><div class="bx" style="left:810.3px;top:735.500px;width:9px;height:9px;border-radius:50%;background:#fff;"></div><div class="t" style="left:834.0px;top:725.700px;">Base64</div>
<div class="bx" style="left:922.3px;top:729px;width:22px;height:22px;border-radius:50%;background:#fff;border:1.500px solid #b3b3b3;"></div><div class="t" style="left:952.5px;top:725.700px;">BC</div>
<div class="bx" style="left:988.8px;top:729px;width:22px;height:22px;border-radius:50%;background:#fff;border:1.500px solid #b3b3b3;"></div><div class="t" style="left:1019.0px;top:725.700px;">Hex</div>
<div class="bx" style="left:1068.3px;top:729px;width:22px;height:22px;border-radius:50%;background:#fff;border:1.500px solid #b3b3b3;"></div><div class="t" style="left:1098.5px;top:725.700px;">Hexadecimal</div>
<div class="bx" style="left:1251.8px;top:729px;width:22px;height:22px;border-radius:50%;background:#fff;border:1.500px solid #b3b3b3;"></div><div class="t" style="left:1282.0px;top:725.700px;">Html</div>
<div class="bx" style="left:1344.3px;top:729px;width:22px;height:22px;border-radius:50%;background:#fff;border:1.500px solid #b3b3b3;"></div><div class="t" style="left:1374.5px;top:725.700px;">Number</div>
<div class="bx" style="left:1462.8px;top:729px;width:22px;height:22px;border-radius:50%;background:#fff;border:1.500px solid #b3b3b3;"></div><div class="t" style="left:1493.0px;top:725.700px;">Unicode</div>
<div class="bx" style="left:1594.3px;top:729px;width:22px;height:22px;border-radius:50%;background:#fff;border:1.500px solid #b3b3b3;"></div><div class="t" style="left:1624.5px;top:725.700px;">URI</div>
<div class="bx" style="left:1673.8px;top:729px;width:22px;height:22px;border-radius:50%;background:#fff;border:1.500px solid #b3b3b3;"></div><div class="t" style="left:1704.0px;top:725.700px;">URIComponent</div>
<div class="bx" style="left:63px;top:765px;width:981px;height:779px;border:1px solid #c9c9c9;border-bottom:none;background:#fff;"></div>
<div class="a" style="left:65px;top:766px;width:913px;height:777px;background:#cbe9ce;"></div>
<div class="a" style="left:65px;top:766px;width:913px;height:41px;background:#fcfaed;"></div>
<div class="vl" style="left:136.500px;top:766px;height:777px;width:2px;background:rgba(228,228,232,.8);"></div>
<div class="ln" style="left:64px;width:46.500px;top:770.400px;">1</div>
<svg style="left:1007px;top:785px;" width="22" height="24" viewBox="0 0 22 24"><path class="s" d="M6 4.500V4Q6 2 8 2H17.500Q19.500 2 19.500 4V15.500Q19.500 17.500 17.500 17.500H17"/><rect class="s" x="2" y="5.500" width="14.500" height="16" rx="2.500"/><path class="s" d="M6 10.500H12.500M6 13.700H12.500M6 17H12.500" style="stroke-width:1.500"/></svg>
<svg style="left:1007px;top:824px;" width="22" height="24" viewBox="0 0 22 24"><path class="s" d="M2 6H20M7.500 6V4.500Q7.500 2.500 9.500 2.500H12.500Q14.500 2.500 14.500 4.500V6M3.800 6V19.500Q3.800 22 6.300 22H15.700Q18.200 22 18.200 19.500V6M8.800 10.500V17.500M13.200 10.500V17.500"/></svg>
<div class="bx" style="left:1001px;top:858px;width:33px;height:33px;border-radius:5px;background:#d0d0d0;"></div>
<svg style="left:1005px;top:863px;" width="26" height="24" viewBox="0 0 26 24"><path class="s" d="M2.500 5.500H23M2.500 12H18.500Q22.500 12 22.500 15.500Q22.500 19 18.500 19H13.500M16.500 16L13.500 19L16.500 22M2.500 19H8.500"/></svg>
<div class="bx" style="left:1061px;top:770px;width:145px;height:35.500px;border:1.500px solid #bfbfbf;border-radius:5.500px;background:#fff;"></div>
<div class="t" style="left:1061px;top:774.300px;width:145px;text-align:center;">Demo</div>
<div class="bx" style="left:1061px;top:1137px;width:145px;height:35.500px;border:1.500px solid #bfbfbf;border-radius:5.500px;background:#fff;"></div>
<div class="t" style="left:1081.500px;top:1141.300px;">Encode</div>
<svg style="left:1171px;top:1147px;" width="16" height="16" viewBox="0 0 16 16"><path d="M1.500 2L14 8L1.500 14Z" fill="#000"/></svg>
<div class="bx" style="left:1061px;top:1189.500px;width:145px;height:35.500px;border:1.500px solid #bfbfbf;border-radius:5.500px;background:#fff;"></div>
<svg style="left:1081px;top:1199.500px;" width="16" height="16" viewBox="0 0 16 16"><path d="M14.500 2L2 8L14.500 14Z" fill="#000"/></svg>
<div class="t" style="left:1107.500px;top:1193.800px;">Decode</div>
<div class="bx" style="left:1223px;top:765px;width:1017px;height:779px;border:1px solid #c9c9c9;border-bottom:none;background:#fff;"></div>
<div class="a" style="left:1224px;top:766px;width:951px;height:777px;background:#cbe9ce;"></div>
<div class="a" style="left:1224px;top:766px;width:951px;height:41px;background:#fcfaed;"></div>
<div class="vl" style="left:1295.500px;top:766px;height:777px;width:2px;background:rgba(228,228,232,.8);"></div>
<div class="ln" style="left:1224px;width:46.500px;top:770.400px;">1</div>
<div class="a" style="left:1299px;top:771px;width:3px;height:33px;background:#000;"></div>
<svg style="left:2204px;top:785px;" width="22" height="24" viewBox="0 0 22 24"><path class="s" d="M6 4.500V4Q6 2 8 2H17.500Q19.500 2 19.500 4V15.500Q19.500 17.500 17.500 17.500H17"/><rect class="s" x="2" y="5.500" width="14.500" height="16" rx="2.500"/><path class="s" d="M6 10.500H12.500M6 13.700H12.500M6 17H12.500" style="stroke-width:1.500"/></svg>
<svg style="left:2204px;top:824px;" width="22" height="24" viewBox="0 0 22 24"><path class="s" d="M2 6H20M7.500 6V4.500Q7.500 2.500 9.500 2.500H12.500Q14.500 2.500 14.500 4.500V6M3.800 6V19.500Q3.800 22 6.300 22H15.700Q18.200 22 18.200 19.500V6M8.800 10.500V17.500M13.200 10.500V17.500"/></svg>
<div class="bx" style="left:2198px;top:858px;width:33px;height:33px;border-radius:5px;background:#d0d0d0;"></div>
<svg style="left:2202px;top:863px;" width="26" height="24" viewBox="0 0 26 24"><path class="s" d="M2.500 5.500H23M2.500 12H18.500Q22.500 12 22.500 15.500Q22.500 19 18.500 19H13.500M16.500 16L13.500 19L16.500 22M2.500 19H8.500"/></svg>
<!--TOOLSET-->

<!-- ===== STATUS ===== -->
<svg style="left:22px;top:1563px;" width="14" height="14" viewBox="0 0 14 14"><rect x="1.500" y="1.800" width="11" height="11" rx="2" fill="#e7effd" stroke="#3574f0" stroke-width="1.600"/></svg>
<div class="t" style="left:40.5px;top:1555.600px;">D:</div><div class="t" style="left:103.7px;top:1555.600px;">code</div><div class="t" style="left:192.7px;top:1555.600px;">ob</div><div class="t" style="left:256.0px;top:1555.600px;">IdeaProjects</div><div class="t" style="left:448.0px;top:1555.600px;">intellij-plugin-ob</div><div class="t" style="left:717.3px;top:1555.600px;">toolset-demo</div><div class="t" style="left:940.0px;top:1555.600px;">demo1.txt</div>
<svg style="left:80px;top:1562px;" width="12" height="16" viewBox="0 0 12 16"><path d="M3.500 2.500L9 8L3.500 13.500" fill="none" stroke="#7e828e" stroke-width="1.400" stroke-linecap="round" stroke-linejoin="round"/></svg><svg style="left:169px;top:1562px;" width="12" height="16" viewBox="0 0 12 16"><path d="M3.500 2.500L9 8L3.500 13.500" fill="none" stroke="#7e828e" stroke-width="1.400" stroke-linecap="round" stroke-linejoin="round"/></svg><svg style="left:232px;top:1562px;" width="12" height="16" viewBox="0 0 12 16"><path d="M3.500 2.500L9 8L3.500 13.500" fill="none" stroke="#7e828e" stroke-width="1.400" stroke-linecap="round" stroke-linejoin="round"/></svg><svg style="left:425px;top:1562px;" width="12" height="16" viewBox="0 0 12 16"><path d="M3.500 2.500L9 8L3.500 13.500" fill="none" stroke="#7e828e" stroke-width="1.400" stroke-linecap="round" stroke-linejoin="round"/></svg><svg style="left:695px;top:1562px;" width="12" height="16" viewBox="0 0 12 16"><path d="M3.500 2.500L9 8L3.500 13.500" fill="none" stroke="#7e828e" stroke-width="1.400" stroke-linecap="round" stroke-linejoin="round"/></svg><svg style="left:887px;top:1562px;" width="12" height="16" viewBox="0 0 12 16"><path d="M3.500 2.500L9 8L3.500 13.500" fill="none" stroke="#7e828e" stroke-width="1.400" stroke-linecap="round" stroke-linejoin="round"/></svg>
<svg style="left:912px;top:1560px;" width="22" height="22" viewBox="0 0 22 22"><path class="s" style="stroke-width:1.500" d="M1.500 3.500H18.500M1.500 8H14M1.500 12.500H18.500M1.500 17H12"/></svg>
<svg style="left:1776px;top:1561px;" width="20" height="20" viewBox="0 0 48 48"><path fill="#EA4335" d="M24 9.500c3.540 0 6.710 1.220 9.210 3.600l6.850-6.850C35.900 2.380 30.470 0 24 0 14.620 0 6.510 5.380 2.560 13.220l7.980 6.190C12.430 13.720 17.740 9.500 24 9.500z"/><path fill="#4285F4" d="M46.980 24.550c0-1.570-.15-3.090-.38-4.550H24v9.020h12.940c-.58 2.960-2.260 5.480-4.780 7.180l7.730 6c4.510-4.180 7.090-10.360 7.090-17.650z"/><path fill="#FBBC05" d="M10.530 28.590c-.48-1.450-.76-2.990-.76-4.590s.27-3.140.76-4.590l-7.980-6.190C.92 16.460 0 20.120 0 24c0 3.880.92 7.540 2.560 10.780l7.970-6.190z"/><path fill="#34A853" d="M24 48c6.480 0 11.930-2.130 15.890-5.810l-7.730-6c-2.150 1.450-4.920 2.300-8.160 2.300-6.260 0-11.570-4.220-13.470-9.910l-7.980 6.190C6.510 42.620 14.620 48 24 48z"/></svg>
<div class="t" style="left:1821.5px;top:1556px;">12:17</div><div class="t" style="left:1909.3px;top:1556px;">CRLF</div><div class="t" style="left:1986.7px;top:1556px;">UTF-8</div><div class="t" style="left:2074.5px;top:1556px;">4 spaces</div>
<svg style="left:2205px;top:1559px;" width="26" height="24" viewBox="0 0 26 24"><rect x="3.300" y="9.800" width="13.500" height="10.500" rx="2.600" fill="none" stroke="#6c707e" stroke-width="1.700"/><path d="M10 13.500V16.800" stroke="#6c707e" stroke-width="1.800"/><path d="M14.300 9.500V8Q14.300 4 17.800 4Q21.300 4 21.300 8V9.600" fill="none" stroke="#6c707e" stroke-width="1.700" stroke-linecap="round"/></svg>
<svg style="left:2252px;top:1560px;" width="22" height="22" viewBox="0 0 22 22"><circle cx="11" cy="10.900" r="10.500" fill="#e55765"/><rect x="9.300" y="4.500" width="3.400" height="8" rx="1.200" fill="#fff"/><circle cx="11" cy="15.700" r="1.800" fill="#fff"/></svg>
<!--STATUS-->

</div></div>
</body>
</html>
